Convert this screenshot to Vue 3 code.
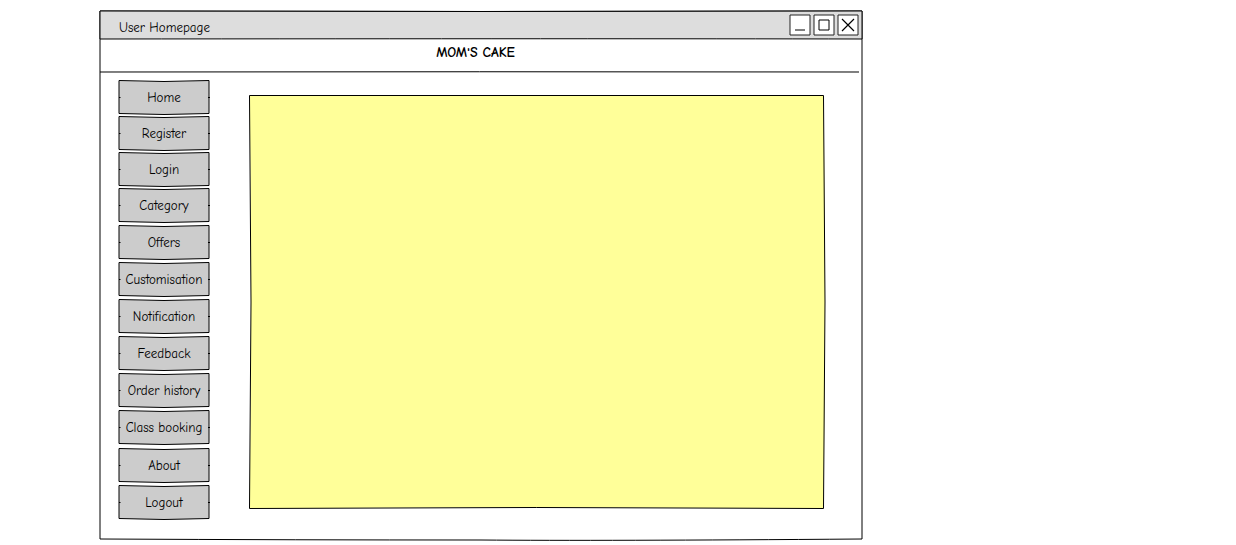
<script setup>
const items = [
  'Home', 'Register', 'Login', 'Category', 'Offers', 'Customisation',
  'Notification', 'Feedback', 'Order history', 'Class booking', 'About', 'Logout',
]
</script>

<template>
  <div class="window">
    <svg class="sketch" viewBox="0 0 763 530" preserveAspectRatio="none" aria-hidden="true">
      <path class="ink" d="M0 0 Q381 1 762 0 L762 528 Q500 530 381 529 Q200 529 0 528 Z" />
    </svg>
    <header class="titlebar">
      <svg class="sketch" viewBox="0 0 763 28" preserveAspectRatio="none" aria-hidden="true">
        <path class="ink bar" d="M0 0 Q381 1 762 0 L762 28 Q500 27.5 0 28 Z" />
      </svg>
      <span class="title">User Homepage</span>
      <div class="controls">
        <button type="button" class="control" aria-label="Minimise">
          <svg viewBox="0 0 22 22"><path class="box" d="M1 1H21V21H1Z" /><path class="ink" d="M6 16H16" /></svg>
        </button>
        <button type="button" class="control" aria-label="Maximise">
          <svg viewBox="0 0 22 22"><path class="box" d="M1 1H21V21H1Z" /><path class="ink" d="M6 6H16V16H6Z" /></svg>
        </button>
        <button type="button" class="control" aria-label="Close">
          <svg viewBox="0 0 22 22"><path class="box" d="M1 1H21V21H1Z" /><path class="cross" d="M5 5L17 17M17 5L5 17" /></svg>
        </button>
      </div>
    </header>
    <div class="banner">
      <h1>MOM'S CAKE</h1>
      <svg class="sketch" viewBox="0 0 760 33" preserveAspectRatio="none" aria-hidden="true">
        <path class="ink" d="M0 33 Q380 32.5 760 33" />
      </svg>
    </div>
    <div class="body">
      <nav>
        <ul>
          <li v-for="item in items" :key="item">
            <button type="button" class="item">
              <svg class="sketch" viewBox="0 0 92 35" preserveAspectRatio="none" aria-hidden="true">
                <path class="ink face" d="M1 .5 Q46 2.5 91 .5 V33.5 Q46 35.5 1 33.5 Z" />
                <path class="ink" d="M1 17.5H2.5M90 17.5H92" />
              </svg>
              <span>{{ item }}</span>
            </button>
          </li>
        </ul>
      </nav>
      <main>
        <svg class="sketch" viewBox="0 0 577 414" preserveAspectRatio="none" aria-hidden="true">
          <path class="panel" d="M.5 .5 H574.5 Q577.5 207 574.5 413.5 Q287 411.5 .5 413.5 Q3.5 207 .5 .5 Z" />
        </svg>
      </main>
    </div>
  </div>
</template>

<style>
body {
  background: #fff;
}
</style>

<style scoped>
.window {
  position: relative;
  margin: 11px 373px 0 100px;
  font-family: "Comic Sans MS", "Comic Neue", "Open Sans", sans-serif;
  font-size: 13px;
  line-height: 16px;
  font-variant-ligatures: none;
  color: #000;
}
.sketch {
  position: absolute;
  inset: 0;
  width: 100%;
  height: 100%;
  overflow: visible;
  pointer-events: none;
}
.ink, .panel {
  fill: none;
  stroke: #000;
  stroke-width: 1;
  vector-effect: non-scaling-stroke;
}
.bar { fill: #ddd; }
.face { fill: #ccc; }
.panel { fill: #ff9; }
.box { fill: #fff; stroke: #222; stroke-width: 1; }
.cross { fill: none; stroke: #000; stroke-width: 1.2; }
.titlebar {
  position: relative;
  display: flex;
  align-items: center;
  justify-content: space-between;
  height: 28px;
  padding: 0 4px 0 19px;
}
.title {
  position: relative;
  padding-top: 6px;
}
.controls {
  position: relative;
  display: flex;
  gap: 2px;
}
.control {
  width: 22px;
  height: 22px;
  padding: 0;
  border: 0;
  background: none;
}
.control svg {
  display: block;
  width: 22px;
  height: 22px;
}
.banner {
  position: relative;
  height: 33px;
  margin-right: 4px;
}
h1 {
  margin: 0;
  padding: 6px 8px 0 0;
  font-size: 14px;
  line-height: 16px;
  font-weight: 700;
  text-align: center;
}
.body {
  display: flex;
  gap: 39px;
  padding: 8px 37px 21px 18px;
}
ul {
  margin: 0;
  padding: 0;
  list-style: none;
}
li + li { margin-top: 1px; }
li:nth-child(n + 5) { margin-top: 2px; }
li:nth-child(11) { margin-top: 3px; }
.item {
  position: relative;
  display: block;
  width: 92px;
  height: 35px;
  padding: 0;
  border: 0;
  background: none;
  font: inherit;
  font-variant-ligatures: none;
  color: inherit;
  white-space: nowrap;
}
.item span { position: relative; }
main {
  position: relative;
  flex: 1;
  margin: 15px 0 11px;
}
</style>
